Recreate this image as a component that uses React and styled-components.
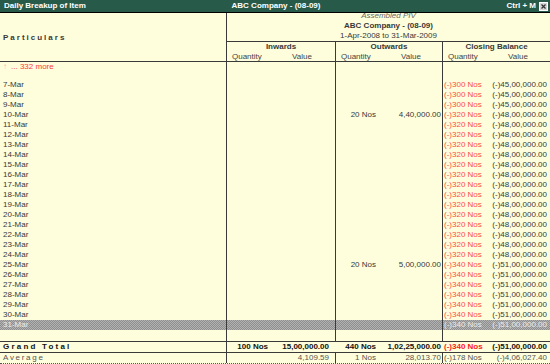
import styled, { createGlobalStyle } from "styled-components"

const GlobalStyle = createGlobalStyle`
  *, *::before, *::after { box-sizing: border-box; }
  html, body { margin: 0; padding: 0; background: #fefedc; }
  body { font-family: "Liberation Sans", Arial, sans-serif; overflow: hidden; }
`

const LINE = "#3a3a3a"

const Screen = styled.div`
  width: 550px;
  height: 364px;
  display: flex;
  flex-direction: column;
  background: #fefedc;
  color: #383838;
  font-size: 8px;
  overflow: hidden;
`

const TitleBar = styled.div`
  height: 13px;
  flex-shrink: 0;
  display: grid;
  grid-template-columns: 1fr auto 1fr;
  align-items: center;
  padding: 0 2px 0 4px;
  background: #285a4a;
  color: #fff;
  font-weight: bold;
  font-size: 8px;
  line-height: 12px;
  border-bottom: 1px solid #000;
`

const TitleRight = styled.div`
  justify-self: end;
  display: flex;
  align-items: center;
  gap: 3px;
`

const Header = styled.div`
  height: 49px;
  flex-shrink: 0;
  display: grid;
  grid-template-columns: 226px 1fr;
  border-bottom: 1px solid ${LINE};
`

const Spaced = styled.div`
  display: flex;
  align-items: center;
  padding-left: 3px;
  font-weight: ${p => (p.$bold ? "bold" : "normal")};
  letter-spacing: ${p => p.$spacing}px;
  white-space: nowrap;
`

const HeadRight = styled.div`
  border-left: 1px solid ${LINE};
  display: flex;
  flex-direction: column;
`

const ReportInfo = styled.div`
  height: 28px;
  display: flex;
  flex-direction: column;
  justify-content: flex-end;
  align-items: center;
  line-height: 10px;
  white-space: nowrap;
`

const InfoLine = styled.div`
  font-style: ${p => (p.$italic ? "italic" : "normal")};
  font-weight: ${p => (p.$bold ? "bold" : "normal")};
  color: ${p => (p.$italic ? "#666" : "#383838")};
`

const Groups = styled.div`
  height: 20px;
  display: grid;
  grid-template-columns: 108px 107px 108px;
  border-top: 1px solid ${LINE};
`

const GroupHead = styled.div`
  border-left: ${p => (p.$line ? `1px solid ${LINE}` : "none")};
  display: flex;
  flex-direction: column;
`

const GroupName = styled.div`
  height: 10px;
  line-height: 10px;
  text-align: center;
  font-weight: bold;
`

const SubHeads = styled.div`
  display: grid;
  grid-template-columns: 60px 1fr;
  line-height: 9px;
  color: #444;

  & > span {
    padding-left: 5px;
  }
`

const Body = styled.div`
  flex: 1;
  display: flex;
  flex-direction: column;
`

const Row = styled.div`
  height: ${p => p.$h}px;
  flex-shrink: 0;
  display: grid;
  grid-template-columns: 226px 109px 107px 108px;
  line-height: 10px;
  white-space: nowrap;
  font-weight: ${p => (p.$bold ? "bold" : "normal")};
  color: ${p => p.$color || "#383838"};
  border-top: ${p => (p.$top ? `1px solid ${LINE}` : "none")};
  border-bottom: ${p => (p.$bottom ? "1px dotted #555" : "none")};
  background: ${p =>
    p.$selected
      ? "repeating-conic-gradient(#8e8e8e 0 25%, #b2b2b2 0 50%) 0 0 / 2px 2px"
      : "transparent"};
`

const NameCell = styled.div`
  padding-left: 3px;
  letter-spacing: ${p => p.$spacing || 0}px;
`

const MoreLink = styled.span`
  color: #ff3a3a;

  & > b {
    font-weight: normal;
    color: #ffb0b0;
    margin-right: 4px;
  }
`

const GroupCell = styled.div`
  display: grid;
  grid-template-columns: ${p => p.$split}px 1fr;
  border-left: ${p => (p.$line ? `1px solid ${LINE}` : "1px solid transparent")};
`

const Qty = styled.span`
  text-align: ${p => p.$align};
  padding: ${p => (p.$align === "left" ? "0 0 0 1px" : `0 ${p.$pad}px 0 0`)};
  color: ${p => (p.$red ? (p.$strong ? "#ff1a1a" : "#ff4a4a") : "inherit")};
`

const Val = styled.span`
  text-align: right;
  padding-right: ${p => p.$pad}px;
`

const GROUPS = [
  { key: "in", split: 45, align: "right", qPad: 4, vPad: 6 },
  { key: "out", split: 44, align: "right", qPad: 4, vPad: 1 },
  { key: "cl", split: 45, align: "left", qPad: 0, vPad: 3 },
]

const CloseBox = () => (
  <svg width="9" height="9" viewBox="0 0 9 9">
    <rect x="0.5" y="0.5" width="8" height="8" fill="#d6d6d6" stroke="#fff" />
    <path d="M2.5 2.5 L6.5 6.5 M6.5 2.5 L2.5 6.5" stroke="#333" strokeWidth="1.2" />
  </svg>
)

const Cells = ({ data = {}, redClosing, strong, innerLines = true }) =>
  GROUPS.map((g, i) => {
    const [q, v] = data[g.key] || []
    return (
      <GroupCell key={g.key} $split={g.split} $line={i === 0 || innerLines}>
        <Qty $align={g.align} $pad={g.qPad} $red={g.key === "cl" && redClosing} $strong={strong}>
          {q}
        </Qty>
        <Val $pad={g.vPad}>{v}</Val>
      </GroupCell>
    )
  })

const days = Array.from({ length: 25 }, (_, i) => i + 7)

const closingFor = d => {
  if (d < 10) return ["(-)300 Nos", "(-)45,00,000.00"]
  if (d < 25) return ["(-)320 Nos", "(-)48,00,000.00"]
  return ["(-)340 Nos", "(-)51,00,000.00"]
}

const outwardsFor = d => {
  if (d === 10) return ["20 Nos", "4,40,000.00"]
  if (d === 25) return ["20 Nos", "5,00,000.00"]
  return undefined
}

const App = () => {
  return (
    <Screen>
      <GlobalStyle />
      <TitleBar>
        <span>Daily Breakup of Item</span>
        <span>ABC Company - (08-09)</span>
        <TitleRight>
          <span>Ctrl + M</span>
          <CloseBox />
        </TitleRight>
      </TitleBar>

      <Header>
        <Spaced $bold $spacing={2}>Particulars</Spaced>
        <HeadRight>
          <ReportInfo>
            <InfoLine $italic>Assembled PIV</InfoLine>
            <InfoLine $bold>ABC Company - (08-09)</InfoLine>
            <InfoLine>1-Apr-2008 to 31-Mar-2009</InfoLine>
          </ReportInfo>
          <Groups>
            {["Inwards", "Outwards", "Closing Balance"].map((name, i) => (
              <GroupHead key={name} $line={i > 0}>
                <GroupName>{name}</GroupName>
                <SubHeads>
                  <span>Quantity</span>
                  <span>Value</span>
                </SubHeads>
              </GroupHead>
            ))}
          </Groups>
        </HeadRight>
      </Header>

      <Body>
        <Row $h={18}>
          <NameCell>
            <MoreLink><b>↑</b>... 332 more</MoreLink>
          </NameCell>
          <Cells />
        </Row>

        {days.map(d => (
          <Row key={d} $h={10} $selected={d === 31} $color={d === 31 ? "#ececec" : undefined}>
            <NameCell>{d}-Mar</NameCell>
            <Cells data={{ out: outwardsFor(d), cl: closingFor(d) }} redClosing={d !== 31} />
          </Row>
        ))}

        <Row $h={11}>
          <NameCell />
          <Cells />
        </Row>

        <Row $h={11} $top $bold $color="#111">
          <NameCell $spacing={2.2}>Grand Total</NameCell>
          <Cells
            data={{
              in: ["100 Nos", "15,00,000.00"],
              out: ["440 Nos", "1,02,25,000.00"],
              cl: ["(-)340 Nos", "(-)51,00,000.00"],
            }}
            redClosing
            strong
            innerLines={false}
          />
        </Row>

        <Row $h={12} $top $bottom $color="#555">
          <NameCell $spacing={1.7}>Average</NameCell>
          <Cells
            data={{
              in: ["", "4,109.59"],
              out: ["1 Nos", "28,013.70"],
              cl: ["(-)178 Nos", "(-)4,06,027.40"],
            }}
          />
        </Row>
      </Body>
    </Screen>
  )
}

export default App
